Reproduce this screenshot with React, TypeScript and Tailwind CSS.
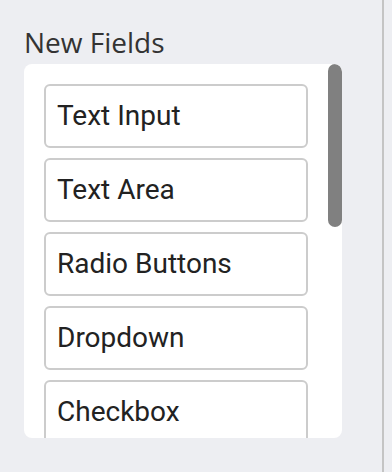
const fields = ["Text Input", "Text Area", "Radio Buttons", "Dropdown", "Checkbox"];

function FieldItem({ label }: { label: string }) {
  return (
    <div className="flex h-16 shrink-0 items-center rounded-md border-2 border-[#cccccc] bg-white px-[11px] font-['Roboto',sans-serif] text-[28px] text-[#222222]">
      {label}
    </div>
  );
}

export default function App() {
  return (
    <div className="min-h-[472px] bg-[#edeef2]">
      <div className="h-[472px] w-[384px] border-r-2 border-[#c4c4c4] pl-6 pt-[28px]">
        <h2 className="mb-2 font-['Open_Sans',sans-serif] text-[28px] font-normal leading-[28px] text-[#333333]">
          New Fields
        </h2>
        <div className="flex h-[374px] w-[318px] overflow-hidden rounded-lg bg-white">
          <div className="flex min-w-0 flex-1 flex-col gap-[10px] overflow-hidden px-5 pt-5">
            {fields.map((f) => (
              <FieldItem key={f} label={f} />
            ))}
          </div>
          {/* scrollbar */}
          <div className="w-[14px] shrink-0">
            <div className="h-[163px] w-full rounded-full bg-[#808080]" />
          </div>
        </div>
      </div>
    </div>
  );
}
